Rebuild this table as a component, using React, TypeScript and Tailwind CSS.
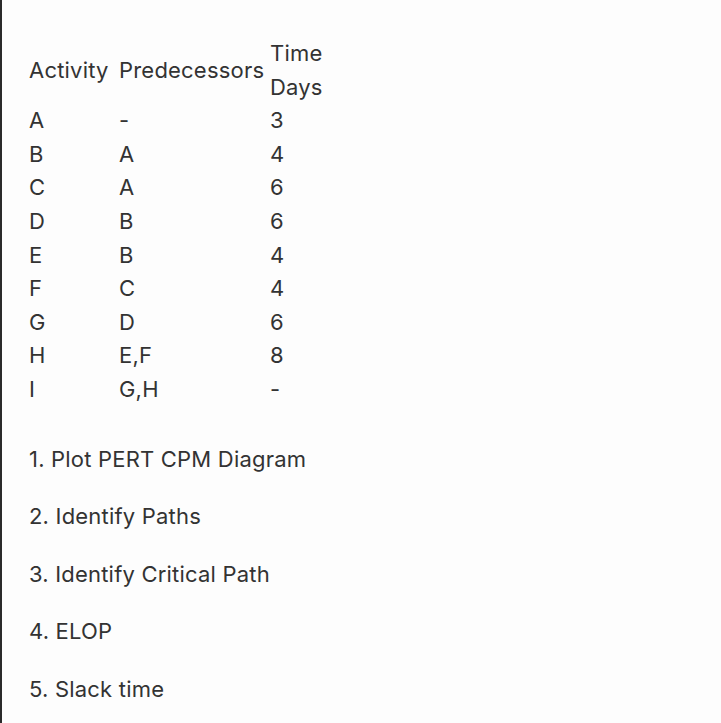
const rows: [string, string, string][] = [
  ['A', '-', '3'],
  ['B', 'A', '4'],
  ['C', 'A', '6'],
  ['D', 'B', '6'],
  ['E', 'B', '4'],
  ['F', 'C', '4'],
  ['G', 'D', '6'],
  ['H', 'E,F', '8'],
  ['I', 'G,H', '-'],
];

const tasks = [
  '1. Plot PERT CPM Diagram',
  '2. Identify Paths',
  '3. Identify Critical Path',
  '4. ELOP',
  '5. Slack time',
];

export default function App() {
  return (
    <div className="min-h-[723px] bg-[#fdfdfd] border-l-2 border-[#2a2a2a] pl-[27px] pt-[37px] pb-4 text-[#333] text-[22px] tracking-[0.2px] leading-[33.6px] font-['Inter',sans-serif]">
      <table className="border-collapse">
        <thead>
          <tr>
            <th className="p-0 w-[90px] text-left font-normal align-middle">Activity</th>
            <th className="p-0 w-[151px] text-left font-normal align-middle">Predecessors</th>
            <th className="p-0 text-left font-normal align-middle">
              Time
              <br />
              Days
            </th>
          </tr>
        </thead>
        <tbody>
          {rows.map(([act, pred, days]) => (
            <tr key={act}>
              <td className="p-0">{act}</td>
              <td className="p-0">{pred}</td>
              <td className="p-0">{days}</td>
            </tr>
          ))}
        </tbody>
      </table>

      <div className="mt-[36px] flex flex-col gap-6">
        {tasks.map((t) => (
          <p key={t}>{t}</p>
        ))}
      </div>
    </div>
  );
}
